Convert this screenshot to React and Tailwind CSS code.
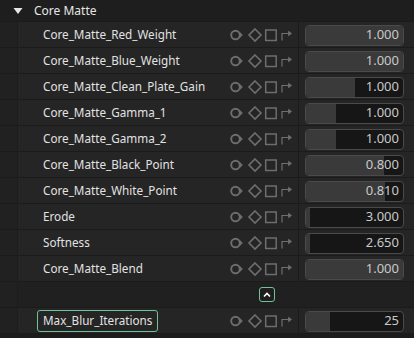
import React from "react";

const rows = [
  { name: "Core_Matte_Red_Weight", value: "1.000", fill: 1 },
  { name: "Core_Matte_Blue_Weight", value: "1.000", fill: 1 },
  { name: "Core_Matte_Clean_Plate_Gain", value: "1.000", fill: 0.5 },
  { name: "Core_Matte_Gamma_1", value: "1.000", fill: 0.31 },
  { name: "Core_Matte_Gamma_2", value: "1.000", fill: 0.31 },
  { name: "Core_Matte_Black_Point", value: "0.800", fill: 0.8 },
  { name: "Core_Matte_White_Point", value: "0.810", fill: 0.81 },
  { name: "Erode", value: "3.000", fill: 0.04 },
  { name: "Softness", value: "2.650", fill: 0.04 },
  { name: "Core_Matte_Blend", value: "1.000", fill: 1 }
];

const font = { fontFamily: "'Noto Sans', 'Open Sans', sans-serif" };

const KeyIcons = () => (
  <svg width="70" height="26" viewBox="0 0 70 26" fill="none" stroke="#6e6e6e" strokeWidth="1.5">
    {/* keyframe circle */}
    <circle cx="7.5" cy="13" r="4.3" strokeWidth="1.9" />
    <path d="M11.8 10.6 L14.4 13 L11.8 15.4 Z" fill="#6e6e6e" strokeWidth="1" />
    {/* diamond */}
    <path d="M27 7 L33 13 L27 19 L21 13 Z" strokeWidth="1.6" />
    {/* square */}
    <rect x="37.7" y="8" width="10.5" height="10.5" />
    {/* arrow */}
    <path d="M54 18.5 V11.5 H62" strokeWidth="1.2" />
    <path d="M60.5 9.3 L63.5 11.5 L60.5 13.7 Z" fill="#6e6e6e" strokeWidth="0.8" />
  </svg>
);

const ValueField = ({ value, fill }) => (
  <div className="relative w-[99px] h-[21px] rounded-[4px] border border-[#4a4a4a] bg-[#161616] overflow-hidden">
    <div className="absolute inset-y-0 left-0 bg-[#3a3a3a]" style={{ width: `${fill * 100}%` }} />
    <div className="relative h-full flex items-center justify-end pr-[4px] text-[13px] text-[#c9c9c9]">
      {value}
    </div>
  </div>
);

const Row = ({ children, value, fill }) => (
  <div className="flex h-[26px] border-b border-[#1b1b1b] bg-[#252525]">
    <div className="w-[18px] shrink-0 bg-[#212121] border-r border-[#1d1d1d]" />
    <div className="w-[210px] shrink-0 flex items-center pl-[25px]">{children}</div>
    <div className="w-[70px] shrink-0 flex items-center">
      <KeyIcons />
    </div>
    <div className="w-px shrink-0 bg-[#1b1b1b]" />
    <div className="flex-1 flex items-center pl-[6px] pt-[1px]">
      <ValueField value={value} fill={fill} />
    </div>
  </div>
);

export default function App() {
  return (
    <div className="w-[414px] h-[338px] bg-[#1c1c1c] overflow-hidden select-none" style={font}>
      <div className="h-[22px] flex items-center bg-[#1e1e1e] border-b border-[#1b1b1b]">
        <svg width="10" height="8" viewBox="0 0 10 8" className="ml-[13px]">
          <path d="M0.5 1 H9.5 L5 7 Z" fill="#e6e6e6" />
        </svg>
        <span className="ml-[11px] text-[12px] text-[#e6e6e6]">Core Matte</span>
      </div>
      {rows.map((r) => (
        <Row key={r.name} value={r.value} fill={r.fill}>
          <span className="text-[11.7px] text-[#e2e2e2] whitespace-nowrap">{r.name}</span>
        </Row>
      ))}
      <div className="flex h-[26px] border-b border-[#1b1b1b] bg-[#202020]">
        <div className="w-[18px] shrink-0 bg-[#212121] border-r border-[#1d1d1d]" />
        <div className="w-[241px] shrink-0" />
        <div className="flex items-center">
          <button className="w-[16px] h-[15px] rounded-[3px] border border-[#6fc29a] bg-[#1e1e1e] flex items-center justify-center">
            <svg width="8" height="6" viewBox="0 0 8 6">
              <path d="M1 4.5 L4 1.5 L7 4.5" stroke="#ffffff" strokeWidth="1.6" fill="none" />
            </svg>
          </button>
        </div>
      </div>
      <Row value="25" fill={0.25}>
        <span className="-ml-[6px] h-[22px] px-[5px] flex items-center rounded-[3px] border border-[#6fc29a] text-[11.7px] text-[#e2e2e2] whitespace-nowrap">
          Max_Blur_Iterations
        </span>
      </Row>
    </div>
  );
}
